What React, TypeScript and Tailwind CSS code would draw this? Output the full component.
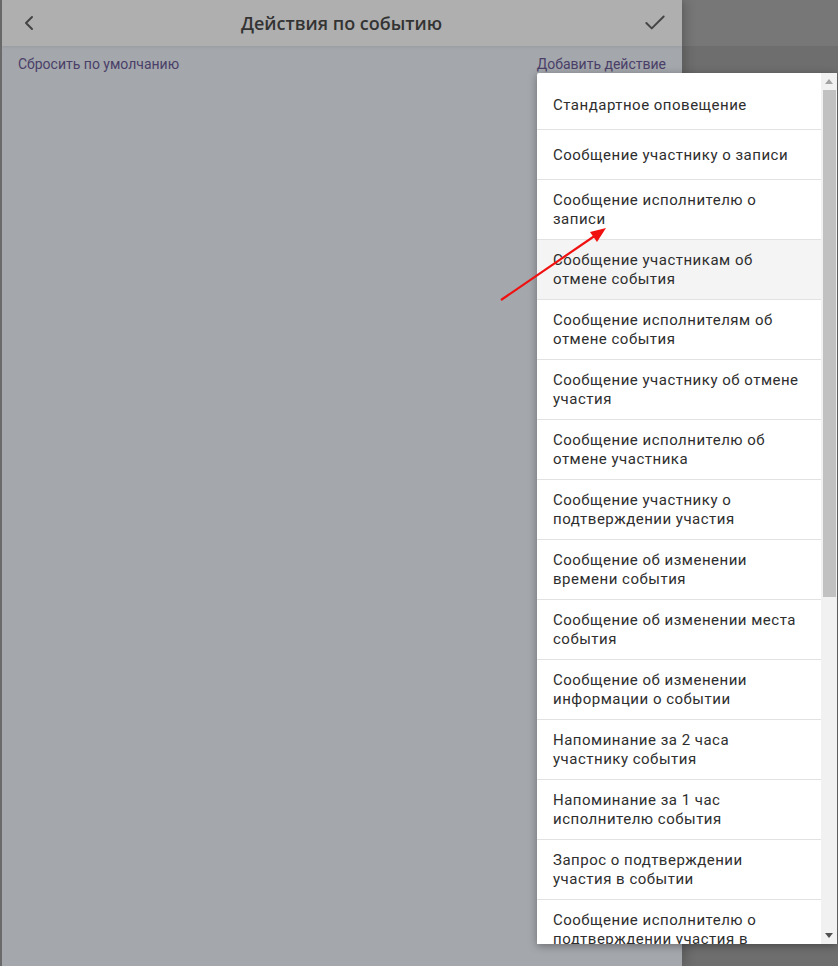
import { Check, ChevronLeft } from 'lucide-react';

const actions = [
  'Стандартное оповещение',
  'Сообщение участнику о записи',
  'Сообщение исполнителю о записи',
  'Сообщение участникам об отмене события',
  'Сообщение исполнителям об отмене события',
  'Сообщение участнику об отмене участия',
  'Сообщение исполнителю об отмене участника',
  'Сообщение участнику о подтверждении участия',
  'Сообщение об изменении времени события',
  'Сообщение об изменении места события',
  'Сообщение об изменении информации о событии',
  'Напоминание за 2 часа участнику события',
  'Напоминание за 1 час исполнителю события',
  'Запрос о подтверждении участия в событии',
  'Сообщение исполнителю о подтверждении участия в событии',
];

export default function App() {
  return (
    <div className="relative flex h-[966px] w-[838px] overflow-hidden bg-[#6e6e6e] font-['Roboto',sans-serif]">
      {/* Dimmed page */}
      <div className="z-10 flex w-[682px] shrink-0 flex-col border-l-2 border-[#6a6a6a] bg-[#a4a7ac] shadow-[4px_0_10px_rgba(0,0,0,0.18)]">
        <div className="flex h-[46px] items-center justify-between bg-[#afafaf] pl-[15px] pr-[14px] shadow-[0_1px_3px_rgba(0,0,0,0.08)]">
          <ChevronLeft size={24} strokeWidth={2} className="text-[#444]" aria-hidden="true" />
          <h1 className="font-['Open_Sans',sans-serif] text-[18px] font-semibold text-[#333]">
            Действия по событию
          </h1>
          <Check size={26} strokeWidth={1.8} className="text-[#444]" aria-hidden="true" />
        </div>
        <div className="flex justify-between pl-[16px] pr-[16px] pt-[8px] text-[14px] leading-[20px] text-[#4a3f68]">
          <span>Сбросить по умолчанию</span>
          <span>Добавить действие</span>
        </div>
      </div>

      <div className="flex flex-1 flex-col">
        <div className="h-[46px] bg-[#777]" />
        <div className="flex-1 bg-[#6e6e6e]" />
      </div>

      {/* Dropdown */}
      <div className="absolute left-[537px] top-[73px] z-20 flex h-[871px] w-[300px] rounded-[2px] bg-white shadow-[0_2px_8px_rgba(0,0,0,0.35)]">
        <ul className="flex-1 overflow-hidden pt-[8px] text-[15px] leading-[19px] tracking-[0.5px] text-[#2e2e2e]">
          {actions.map((label, i) => (
            <li
              key={label}
              className={
                'flex items-center border-b border-[#e2e2e2] pl-[16px] pr-[20px] pt-[11px] pb-[10px] ' +
                (i === 0 ? 'min-h-[49px] ' : 'min-h-[50px] ') +
                (i === 3 ? 'bg-[#f4f4f4]' : 'bg-white')
              }
            >
              {label}
            </li>
          ))}
        </ul>
        <div className="flex w-[16px] flex-col items-center bg-[#f1f1f1]">
          <div className="flex h-[17px] items-center justify-center">
            <svg width="8" height="5" viewBox="0 0 8 5" aria-hidden="true">
              <path d="M0 5 L4 0 L8 5 Z" fill="#a3a3a3" />
            </svg>
          </div>
          <div className="h-[507px] w-[13px] bg-[#c1c1c1]" />
          <div className="flex-1" />
          <div className="flex h-[17px] items-center justify-center">
            <svg width="8" height="5" viewBox="0 0 8 5" aria-hidden="true">
              <path d="M0 0 L8 0 L4 5 Z" fill="#505050" />
            </svg>
          </div>
        </div>
      </div>

      {/* Annotation arrow */}
      <svg
        className="pointer-events-none absolute left-0 top-0 z-30"
        width="838"
        height="966"
        aria-hidden="true"
      >
        <line x1="501" y1="300" x2="596" y2="235" stroke="#f01010" strokeWidth="2.2" />
        <path d="M606 228 L590 232 L597 242 Z" fill="#f01010" />
      </svg>
    </div>
  );
}
